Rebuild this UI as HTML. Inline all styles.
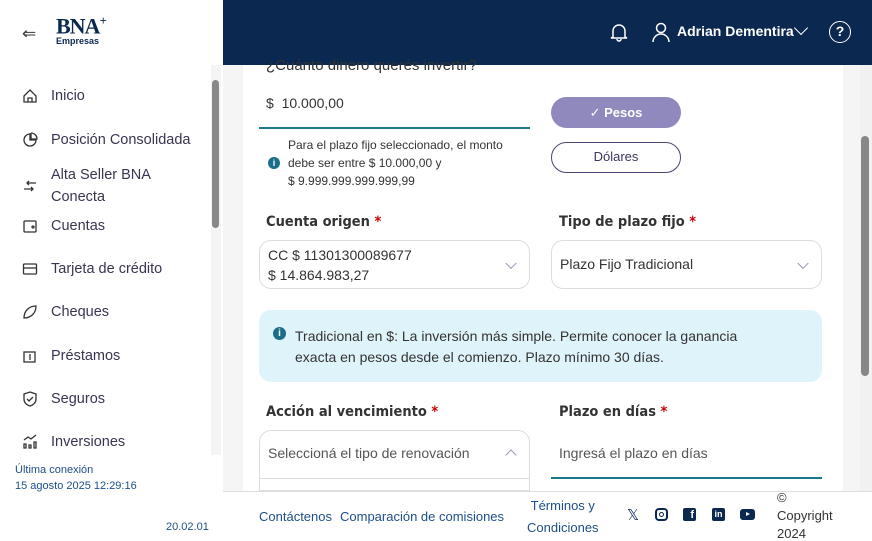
<!DOCTYPE html>
<html><head><meta charset="utf-8"><style>
*{box-sizing:border-box;margin:0;padding:0}
html,body{width:872px;height:541px;overflow:hidden}
body{font-family:"Liberation Sans","DejaVu Sans",sans-serif;background:#f5f5f5;position:relative;color:#333}
.abs{position:absolute}
#side{left:0;top:0;width:223px;height:541px;background:#fff}
#hdr{left:223px;top:0;width:649px;height:65px;background:#0b2850}
.nav{position:absolute;left:22px;font-size:14.5px;color:#3a3550;display:flex;align-items:center}
.nav svg{width:16px;height:16px;margin-right:13px;stroke:#333;fill:none;stroke-width:1.3}
#card{left:243px;top:65px;width:600px;height:426px;background:#fff}
.lbl{font-size:14.5px;color:#333;font-family:"DejaVu Sans Condensed","Liberation Sans",sans-serif;font-weight:600}
.lbl b{color:#c00}
.sel{border:1px solid #ddd;border-radius:12px;background:#fff}
.chev{position:absolute;right:14px;top:50%;width:8px;height:8px;border-right:1.3px solid #9a94b8;border-bottom:1.3px solid #9a94b8;transform:translateY(-70%) rotate(45deg)}
.t{font-size:14px;color:#333}
#foot{left:223px;top:491px;width:649px;height:50px;background:#fff;border-top:1px solid #ddd;overflow:hidden}
.fl{position:absolute;font-size:13px;color:#1d4f8a}
</style></head><body>
<div id="side" class="abs">
 <div class="abs" style="left:22px;top:24px;font-size:17px;color:#333">⇐</div>
 <div class="abs" style="left:56px;top:13px;font-family:'Liberation Serif',serif;font-weight:bold;font-size:22px;color:#0b2850;letter-spacing:-1px">BNA<sup style="font-size:13px">+</sup></div>
 <div class="abs" style="left:56px;top:36px;font-size:9px;font-weight:bold;color:#0b2850">Empresas</div>
 <div class="abs" style="left:211px;top:65px;width:10px;height:390px;background:#f4f4f4"></div>
 <div class="abs" style="left:212px;top:80px;width:7px;height:148px;background:#888;border-radius:4px"></div>
 <div class="nav" style="top:88px"><svg viewBox="0 0 16 16"><path d="M2 8 8 2l6 6v6H2z M6 14v-4h4v4"/></svg>Inicio</div>
 <div class="nav" style="top:132px"><svg viewBox="0 0 16 16"><path d="M8 2a6 6 0 1 0 6 6H8z M9 1v6h6a6 6 0 0 0-6-6"/></svg>Posición Consolidada</div>
 <div class="nav" style="top:164px;line-height:22px"><svg viewBox="0 0 16 16"><path d="M2 11h9 M9 9l2 2-2 2 M14 5H5 M7 3 5 5l2 2"/></svg>Alta Seller BNA<br>Conecta</div>
 <div class="nav" style="top:218px"><svg viewBox="0 0 16 16"><rect x="2" y="3" width="12" height="11" rx="1"/><circle cx="11" cy="9" r="1"/></svg>Cuentas</div>
 <div class="nav" style="top:261px"><svg viewBox="0 0 16 16"><rect x="1.5" y="3" width="13" height="10" rx="1"/><path d="M1.5 7h13"/></svg>Tarjeta de crédito</div>
 <div class="nav" style="top:304px"><svg viewBox="0 0 16 16"><path d="M2 14C2 7 7 2 14 2 14 9 9 14 2 14z"/></svg>Cheques</div>
 <div class="nav" style="top:348px"><svg viewBox="0 0 16 16"><rect x="2" y="4" width="11" height="10"/><path d="M8 6v6"/></svg>Préstamos</div>
 <div class="nav" style="top:391px"><svg viewBox="0 0 16 16"><path d="M8 1l6 2v5c0 4-3 6-6 7-3-1-6-3-6-7V3z M5 8l2 2 4-4"/></svg>Seguros</div>
 <div class="nav" style="top:434px"><svg viewBox="0 0 16 16"><path d="M2 6l4-3 3 2 5-4 M2 14v-4h2v4z M7 14v-3h2v3z M12 14V8h2v6z"/></svg>Inversiones</div>
 <div class="abs" style="left:15px;top:462px;font-size:11px;color:#1d4f8a;line-height:16px">Última conexión<br>15 agosto 2025 12:29:16</div>
 <div class="abs" style="left:166px;top:521px;font-size:11px;color:#1d4f8a">20.02.01</div>
</div>
<div id="hdr" class="abs">
 <svg class="abs" style="left:385px;top:21px" width="22" height="22" viewBox="0 0 22 22" fill="none" stroke="#fff" stroke-width="1.5"><path d="M5 16V10a6 6 0 0 1 12 0v6l2 1H3z M9 18a2 2 0 0 0 4 0"/></svg>
 <svg class="abs" style="left:427px;top:21px" width="22" height="22" viewBox="0 0 22 22" fill="none" stroke="#fff" stroke-width="1.5"><circle cx="11" cy="7" r="4.5"/><path d="M3 21a8 8 0 0 1 16 0"/></svg>
 <div class="abs" style="left:454px;top:23px;font-size:14px;font-weight:bold;color:#fff">Adrian Dementira</div>
 <div class="abs" style="left:573px;top:23px;width:10px;height:10px;border-right:1.6px solid #fff;border-bottom:1.6px solid #fff;transform:rotate(45deg)"></div>
 <div class="abs" style="left:606px;top:21px;width:22px;height:22px;border:1.6px solid #fff;border-radius:50%;color:#fff;font-size:14px;text-align:center;line-height:19px;font-weight:bold">?</div>
</div>
<div class="abs" style="left:860px;top:65px;width:12px;height:426px;background:#f1f1f1"></div>
<div class="abs" style="left:861px;top:136px;width:8px;height:240px;background:#888;border-radius:4px"></div>
<div id="card" class="abs">
 <div class="abs t" style="left:23px;top:-8px;font-size:15px">¿Cuánto dinero querés invertir?</div>
 <div class="abs t" style="left:23px;top:30px">$ &nbsp;10.000,00</div>
 <div class="abs" style="left:16px;top:62px;width:271px;height:1.5px;background:#1a7a8a"></div>
 <div class="abs" style="left:25px;top:92px;width:12px;height:12px;border-radius:50%;background:#1a6e87;color:#fff;font-size:9px;text-align:center;line-height:12px;font-weight:bold">i</div>
 <div class="abs" style="left:45px;top:71px;font-size:12px;line-height:18px;color:#333">Para el plazo fijo seleccionado, el monto<br>debe ser entre $ 10.000,00 y<br>$ 9.999.999.999.999,99</div>
 <div class="abs" style="left:308px;top:32px;width:130px;height:31px;border-radius:16px;background:#9089bd;color:#fff;font-size:13px;font-weight:bold;text-align:center;line-height:31px">✓ Pesos</div>
 <div class="abs" style="left:308px;top:77px;width:130px;height:31px;border-radius:16px;border:1.4px solid #4a4575;color:#3a3560;font-size:13px;text-align:center;line-height:28px">Dólares</div>
 <div class="abs lbl" style="left:23px;top:149px">Cuenta origen <b>*</b></div>
 <div class="abs lbl" style="left:316px;top:149px">Tipo de plazo fijo <b>*</b></div>
 <div class="abs sel" style="left:16px;top:175px;width:271px;height:49px"><div class="abs t" style="left:8px;top:4px;line-height:20px">CC $ 11301300089677<br>$ 14.864.983,27</div><div class="chev"></div></div>
 <div class="abs sel" style="left:308px;top:175px;width:271px;height:49px"><div class="abs t" style="left:8px;top:15px">Plazo Fijo Tradicional</div><div class="chev"></div></div>
 <div class="abs" style="left:16px;top:245px;width:563px;height:72px;background:#dff3fa;border-radius:12px">
  <div class="abs" style="left:14px;top:17px;width:13px;height:13px;border-radius:50%;background:#1a6e87;color:#fff;font-size:10px;text-align:center;line-height:13px;font-weight:bold">i</div>
  <div class="abs t" style="left:36px;top:16px;line-height:21px">Tradicional en $: La inversión más simple. Permite conocer la ganancia<br>exacta en pesos desde el comienzo. Plazo mínimo 30 días.</div>
 </div>
 <div class="abs lbl" style="left:23px;top:339px">Acción al vencimiento <b>*</b></div>
 <div class="abs lbl" style="left:316px;top:339px">Plazo en días <b>*</b></div>
 <div class="abs" style="left:16px;top:365px;width:271px;height:49px;border:1px solid #ddd;border-radius:12px 12px 0 0;background:#fff"><div class="abs t" style="left:8px;top:14px;color:#555">Seleccioná el tipo de renovación</div><div class="abs" style="right:14px;top:20px;width:8px;height:8px;border-left:1.3px solid #9a94b8;border-top:1.3px solid #9a94b8;transform:rotate(45deg)"></div></div>
 <div class="abs" style="left:16px;top:413px;width:271px;height:13px;border:1px solid #ddd;background:#fff"></div>
 <div class="abs t" style="left:316px;top:380px;color:#555">Ingresá el plazo en días</div>
 <div class="abs" style="left:308px;top:412px;width:271px;height:1.5px;background:#1a7a8a"></div>
</div>
<div id="foot" class="abs">
 <div class="fl" style="left:36px;top:17px">Contáctenos</div>
 <div class="fl" style="left:117px;top:17px">Comparación de comisiones</div>
 <div class="fl" style="left:304px;top:3px;line-height:22px;text-align:center">Términos y<br>Condiciones</div>
 <div class="fl" style="left:404px;top:14px;font-size:15px;color:#0b2850">𝕏</div>
 <div class="abs" style="left:432px;top:16px;width:13px;height:13px;border:2px solid #0b2850;border-radius:4px"><div style="margin:2px;width:5px;height:5px;border:1.5px solid #0b2850;border-radius:50%"></div></div>
 <div class="abs" style="left:460px;top:16px;width:13px;height:13px;background:#0b2850;border-radius:2px;color:#fff;font-size:11px;font-weight:bold;text-align:right;line-height:15px;padding-right:2px">f</div>
 <div class="abs" style="left:489px;top:16px;width:13px;height:13px;background:#0b2850;border-radius:2px;color:#fff;font-size:9px;font-weight:bold;text-align:center;line-height:13px">in</div>
 <div class="abs" style="left:517px;top:17px;width:15px;height:11px;background:#0b2850;border-radius:3px"><div style="margin:3px 0 0 6px;width:0;height:0;border-left:4px solid #fff;border-top:2.5px solid transparent;border-bottom:2.5px solid transparent"></div></div>
 <div class="abs" style="left:554px;top:-3px;font-size:13px;color:#333;line-height:18px">©<br>Copyright<br>2024</div>
</div>
</body></html>
